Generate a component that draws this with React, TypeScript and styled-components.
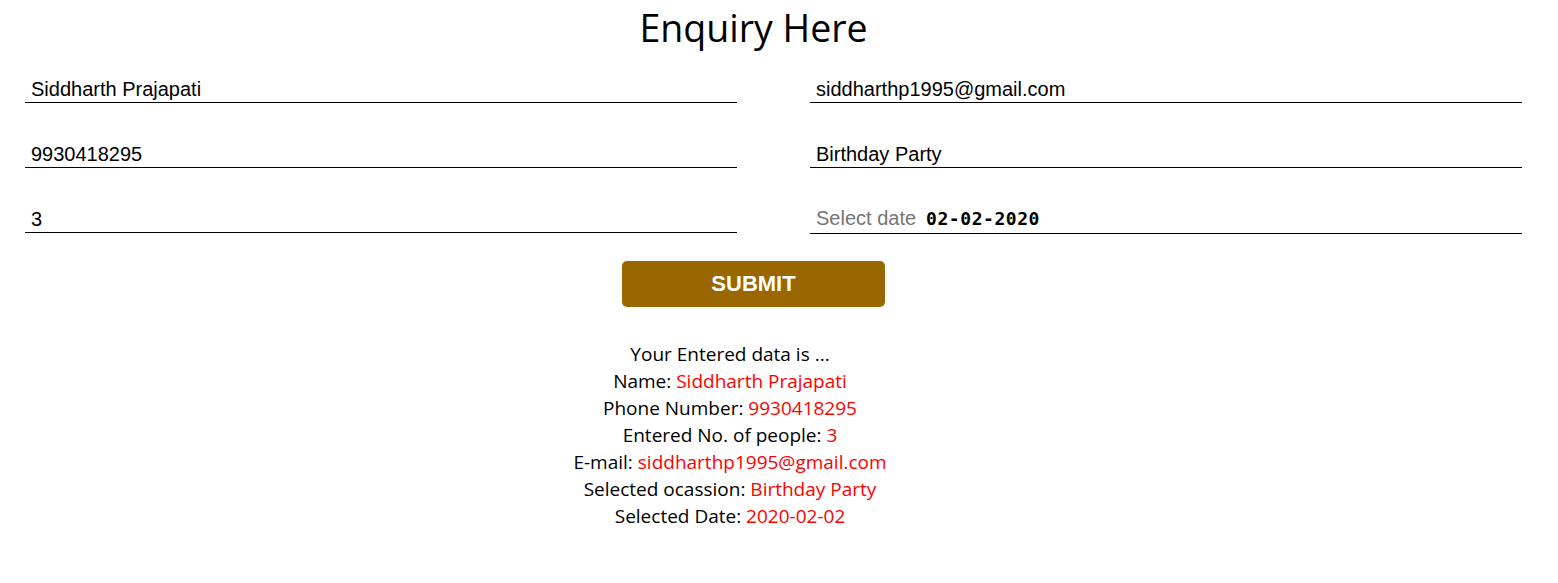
import React from "react";
import styled, { createGlobalStyle } from "styled-components";

const GlobalStyle = createGlobalStyle`
  html, body { margin: 0; padding: 0; background: #fff; }
  body { font-family: "Open Sans", "Noto Sans", sans-serif; color: #000; }
`;

const Page = styled.div`
  display: flex;
  flex-direction: column;
  align-items: stretch;
  width: 1558px;
`;

const Title = styled.h1`
  margin: 2px 0 0;
  padding-right: 51px;
  text-align: center;
  font-family: "Open Sans", sans-serif;
  font-weight: 400;
  font-size: 37.5px;
  line-height: 52px;
`;

const Form = styled.form`
  display: grid;
  grid-template-columns: 712px 712px;
  column-gap: 73px;
  row-gap: 24px;
  padding: 8px 36px 0 25px;
`;

const Field = styled.input`
  box-sizing: border-box;
  width: 100%;
  height: 41px;
  border: none;
  border-bottom: 1px solid #000;
  outline: none;
  padding: 15px 0 0 6px;
  font-family: "Liberation Sans", Arial, sans-serif;
  font-size: 20px;
  color: #000;
  background: transparent;
`;

const DateField = styled.div`
  box-sizing: border-box;
  display: flex;
  align-items: baseline;
  gap: 10px;
  height: 42px;
  border-bottom: 1px solid #000;
  padding: 15px 0 0 6px;
`;

const DateLabel = styled.span`
  font-family: "Liberation Sans", Arial, sans-serif;
  font-size: 20px;
  line-height: 23px;
  color: #757575;
`;

const DateValue = styled.span`
  font-family: "DejaVu Sans Mono", monospace;
  font-weight: 700;
  font-size: 18px;
  letter-spacing: 0.55px;
  color: #000;
`;

const ButtonRow = styled.div`
  display: flex;
  justify-content: center;
  padding: 27px 51px 0 0;
`;

const SubmitButton = styled.button`
  width: 263px;
  height: 46px;
  border: none;
  border-radius: 5px;
  background: #996600;
  color: #fff;
  font-family: "Liberation Sans", Arial, sans-serif;
  font-weight: 700;
  font-size: 22px;
  cursor: pointer;
`;

const Result = styled.div`
  display: flex;
  flex-direction: column;
  align-items: center;
  padding: 34px 98px 0 0;
  font-family: "Open Sans", sans-serif;
  font-size: 19px;
  line-height: 27px;
  color: #000;
`;

const Line = styled.div``;

const Value = styled.span`
  color: #ff0000;
`;

const data = {
  name: "Siddharth Prajapati",
  phone: "9930418295",
  people: "3",
  email: "siddharthp1995@gmail.com",
  occasion: "Birthday Party",
  date: "2020-02-02",
};

export default function App() {
  return (
    <>
      <GlobalStyle />
      <Page>
        <Title>Enquiry Here</Title>
        <Form onSubmit={(e) => e.preventDefault()}>
          <Field defaultValue={data.name} />
          <Field defaultValue={data.email} />
          <Field defaultValue={data.phone} />
          <Field defaultValue={data.occasion} />
          <Field defaultValue={data.people} />
          <DateField>
            <DateLabel>Select date</DateLabel>
            <DateValue>02-02-2020</DateValue>
          </DateField>
        </Form>
        <ButtonRow>
          <SubmitButton type="button">SUBMIT</SubmitButton>
        </ButtonRow>
        <Result>
          <Line>Your Entered data is ...</Line>
          <Line>
            Name: <Value>{data.name}</Value>
          </Line>
          <Line>
            Phone Number: <Value>{data.phone}</Value>
          </Line>
          <Line>
            Entered No. of people: <Value>{data.people}</Value>
          </Line>
          <Line>
            E-mail: <Value>{data.email}</Value>
          </Line>
          <Line>
            Selected ocassion: <Value>{data.occasion}</Value>
          </Line>
          <Line>
            Selected Date: <Value>{data.date}</Value>
          </Line>
        </Result>
      </Page>
    </>
  );
}
